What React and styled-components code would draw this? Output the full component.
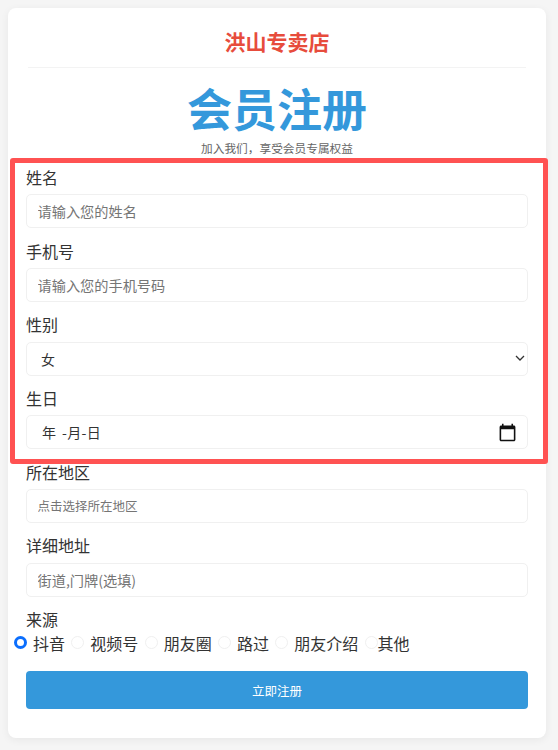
import styled, { createGlobalStyle } from 'styled-components'

const sources = [
  { name: '抖音', checked: true },
  { name: '视频号' },
  { name: '朋友圈' },
  { name: '路过' },
  { name: '朋友介绍' },
  { name: '其他', tight: true },
]

const chevron =
  "url(\"data:image/svg+xml,%3Csvg xmlns='http://www.w3.org/2000/svg' width='10' height='7' viewBox='0 0 10 7'%3E%3Cpath d='M1 1l4 4 4-4' fill='none' stroke='%23333' stroke-width='1.3'/%3E%3C/svg%3E\")"

const GlobalStyle = createGlobalStyle`
  * {
    box-sizing: border-box;
  }

  body {
    margin: 0;
    background: #f5f5f5;
    font-family: "Noto Sans CJK SC", "Liberation Sans", sans-serif;
    color: #333;
  }
`

const Page = styled.div`
  height: 750px;
  padding: 8px 12px 12px 8px;
  overflow: hidden;
`

const Card = styled.div`
  position: relative;
  height: 730px;
  padding: 18px 18px 0;
  background: #fff;
  border-radius: 8px;
  box-shadow: 0 2px 8px rgba(0, 0, 0, 0.06);
`

const Highlight = styled.div`
  position: absolute;
  top: 150px;
  left: 2px;
  width: 538px;
  height: 306px;
  border: 5px solid #ff5252;
  border-radius: 3px;
  pointer-events: none;
`

const Shop = styled.div`
  margin: 0 2px;
  height: 42px;
  border-bottom: 1px solid #f3f3f3;
  text-align: center;
  color: #e74c3c;
  font-size: 21px;
  font-weight: 700;
  line-height: 30px;
`

const Title = styled.h1`
  margin: 9px 0 0;
  text-align: center;
  color: #3498db;
  font-size: 45px;
  font-weight: 700;
  line-height: 62px;
`

const Subtitle = styled.p`
  margin: 0;
  text-align: center;
  color: #666;
  font-size: 11.7px;
  line-height: 18px;
`

const Form = styled.form`
  display: flex;
  flex-direction: column;
  gap: 11.5px;
  margin-top: 9px;
`

const Field = styled.div`
  display: flex;
  flex-direction: column;
  gap: 5.5px;
`

const Label = styled.label`
  color: #333;
  font-size: 16px;
  font-weight: 400;
  line-height: 22.67px;
`

const Input = styled.input`
  width: 100%;
  height: 34px;
  padding: 0 10.5px;
  background: #fff;
  border: 1px solid #f0f0f0;
  border-radius: 5px;
  outline: none;
  font-family: inherit;
  font-size: ${p => p.$size || 14.2}px;
  color: #333;

  &::placeholder {
    color: #757575;
    opacity: 1;
  }
`

const Select = styled.select`
  width: 100%;
  height: 34px;
  padding: 0 14px;
  appearance: none;
  background: #fff ${chevron} no-repeat right 2px center;
  border: 1px solid #f0f0f0;
  border-radius: 5px;
  outline: none;
  font-family: inherit;
  font-size: 14px;
  color: #333;
`

const DateBox = styled.div`
  display: flex;
  align-items: center;
  justify-content: space-between;
  height: 34px;
  padding: 0 10px 0 15px;
  border: 1px solid #f0f0f0;
  border-radius: 5px;
  font-size: 14px;
  word-spacing: 2px;
  letter-spacing: 0.4px;
`

const Sources = styled.div`
  display: flex;
  align-items: center;
  margin: -5.5px 0 0 -12px;
  height: 24px;
`

const Source = styled.label`
  display: flex;
  align-items: center;
  gap: ${p => (p.$tight ? 0 : 6)}px;
  margin-right: 6.3px;
  font-size: 16px;
  line-height: 24px;
`

const Radio = styled.span`
  flex: none;
  width: 13px;
  height: 13px;
  margin-top: -1px;
  border-radius: 50%;
  background: #fff;
  border: ${p => (p.$checked ? '3px solid #0b6efd' : '1px solid #f0f0f0')};
`

const Submit = styled.button`
  height: 38px;
  margin-top: 5px;
  border: none;
  border-radius: 4px;
  background: #3498db;
  color: #fff;
  font-family: inherit;
  font-size: 12.5px;
  font-weight: 400;
`

const CalendarIcon = () => (
  <svg width="19" height="19" viewBox="0 0 24 24" fill="#111">
    <path d="M20 3h-1V1h-2v2H7V1H5v2H4c-1.1 0-2 .9-2 2v16c0 1.1.9 2 2 2h16c1.1 0 2-.9 2-2V5c0-1.1-.9-2-2-2zm0 18H4V8h16v13z" />
  </svg>
)

export default function App() {
  return (
    <Page>
      <GlobalStyle />
      <Card>
        <Shop>洪山专卖店</Shop>
        <Title>会员注册</Title>
        <Subtitle>加入我们，享受会员专属权益</Subtitle>
        <Form>
          <Field>
            <Label>姓名</Label>
            <Input placeholder="请输入您的姓名" />
          </Field>
          <Field>
            <Label>手机号</Label>
            <Input placeholder="请输入您的手机号码" />
          </Field>
          <Field>
            <Label>性别</Label>
            <Select defaultValue="女">
              <option>男</option>
              <option>女</option>
            </Select>
          </Field>
          <Field>
            <Label>生日</Label>
            <DateBox>
              <span>年 -月-日</span>
              <CalendarIcon />
            </DateBox>
          </Field>
          <Field>
            <Label>所在地区</Label>
            <Input $size={12.5} placeholder="点击选择所在地区" />
          </Field>
          <Field>
            <Label>详细地址</Label>
            <Input placeholder="街道,门牌(选填)" />
          </Field>
          <Field>
            <Label>来源</Label>
            <Sources>
              {sources.map(s => (
                <Source key={s.name} $tight={s.tight}>
                  <Radio $checked={s.checked} />
                  {s.name}
                </Source>
              ))}
            </Sources>
          </Field>
          <Submit type="button">立即注册</Submit>
        </Form>
        <Highlight />
      </Card>
    </Page>
  )
}
